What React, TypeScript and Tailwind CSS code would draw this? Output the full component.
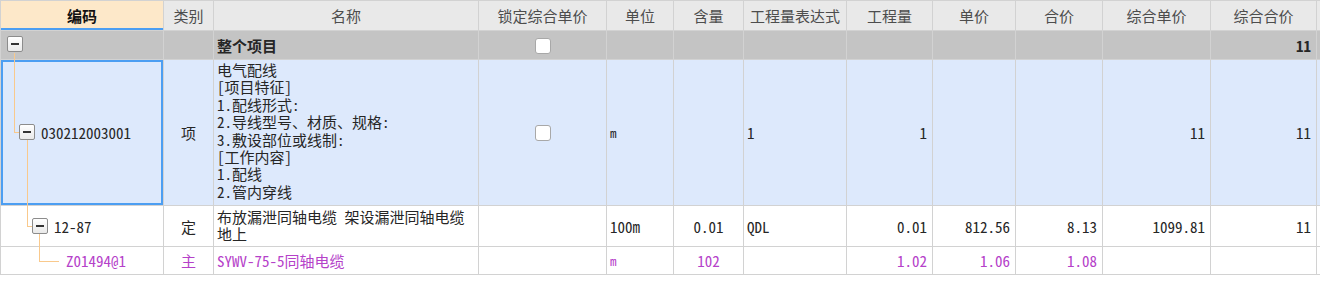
const LINE = "bg-[#f9c98c]";

function ExpandBox({ className }: { className: string }) {
  return (
    <span
      className={`absolute flex h-4 w-4 items-center justify-center rounded-[2px] border border-[#8c8c8c] bg-gradient-to-b from-white to-[#e9e9e9] ${className}`}
    >
      <span className="h-[2px] w-2 bg-[#333]" />
    </span>
  );
}

function Checkbox() {
  return (
    <span className="inline-block h-4 w-4 rounded-[3px] border border-[#a8a8a8] bg-white align-middle" />
  );
}

const th =
  "border border-[#d2d2d2] bg-[#e9e9e9] p-0 text-center font-normal text-[#4d4d4d]";
const td = "border border-[#d2d2d2] p-0";

export default function App() {
  return (
    <div className="h-[281px] w-[1320px] overflow-hidden bg-white font-['Noto_Sans_Mono_CJK_SC','Noto_Sans_CJK_SC',sans-serif] text-[15px] leading-none text-[#262626]">
      <table className="w-[1320px] table-fixed border-collapse">
        <colgroup>
          <col className="w-[163px]" />
          <col className="w-[50px]" />
          <col className="w-[265px]" />
          <col className="w-[128px]" />
          <col className="w-[67px]" />
          <col className="w-[70px]" />
          <col className="w-[103px]" />
          <col className="w-[86px]" />
          <col className="w-[83px]" />
          <col className="w-[87px]" />
          <col className="w-[108px]" />
          <col className="w-[106px]" />
          <col className="w-[4px]" />
        </colgroup>
        <thead>
          <tr className="h-[30px]">
            <th className="border border-[#d2d2d2] bg-[#fde8c9] p-0 text-center font-bold text-[#111] shadow-[inset_0_-2px_0_#4c9ef2]">
              编码
            </th>
            <th className={th}>类别</th>
            <th className={th}>名称</th>
            <th className={th}>锁定综合单价</th>
            <th className={th}>单位</th>
            <th className={th}>含量</th>
            <th className={th}>工程量表达式</th>
            <th className={th}>工程量</th>
            <th className={th}>单价</th>
            <th className={th}>合价</th>
            <th className={th}>综合单价</th>
            <th className={th}>综合合价</th>
            <th className={th} />
          </tr>
        </thead>
        <tbody>
          {/* whole project */}
          <tr className="h-[29px] bg-[#c4c4c4] font-bold">
            <td className={td}>
              <div className="relative h-[28px]">
                <ExpandBox className="left-[6px] top-[5px]" />
                <span className={`absolute left-[13px] top-[22px] h-[8px] w-px ${LINE}`} />
              </div>
            </td>
            <td className={td} />
            <td className={`${td} pl-[3px]`}>整个项目</td>
            <td className={`${td} text-center`}>
              <Checkbox />
            </td>
            <td className={td} />
            <td className={td} />
            <td className={td} />
            <td className={td} />
            <td className={td} />
            <td className={td} />
            <td className={td} />
            <td className={`${td} pr-[5px] text-right`}>11</td>
            <td className={td} />
          </tr>

          {/* bill item */}
          <tr className="h-[146px] bg-[#dde9fc]">
            <td className={`${td} shadow-[inset_0_0_0_2px_#4c9ef2]`}>
              <div className="relative h-[145px]">
                <span className={`absolute left-[13px] top-0 h-[72px] w-px ${LINE}`} />
                <span className={`absolute left-[13px] top-[72px] h-px w-[6px] ${LINE}`} />
                <ExpandBox className="left-[18px] top-[64px]" />
                <span className="absolute left-[40px] top-[65px] leading-[15px]">030212003001</span>
                <span className={`absolute left-[26px] top-[80px] h-[66px] w-px ${LINE}`} />
              </div>
            </td>
            <td className={`${td} text-center`}>项</td>
            <td className={`${td} px-[3px] pt-[1px] align-top leading-[17.4px]`}>
              电气配线
              <br />
              [项目特征]
              <br />
              1.配线形式:
              <br />
              2.导线型号、材质、规格:
              <br />
              3.敷设部位或线制:
              <br />
              [工作内容]
              <br />
              1.配线
              <br />
              2.管内穿线
            </td>
            <td className={`${td} text-center`}>
              <Checkbox />
            </td>
            <td className={`${td} pl-[3px] text-[13px]`}>m</td>
            <td className={td} />
            <td className={`${td} pl-[3px]`}>1</td>
            <td className={`${td} pr-[5px] text-right`}>1</td>
            <td className={td} />
            <td className={td} />
            <td className={`${td} pr-[5px] text-right`}>11</td>
            <td className={`${td} pr-[5px] text-right`}>11</td>
            <td className={td} />
          </tr>

          {/* quota */}
          <tr className="h-[41px] bg-white">
            <td className={td}>
              <div className="relative h-[40px]">
                <span className={`absolute left-[26px] top-0 h-[20px] w-px ${LINE}`} />
                <span className={`absolute left-[26px] top-[20px] h-px w-[6px] ${LINE}`} />
                <ExpandBox className="left-[31px] top-[12px]" />
                <span className="absolute left-[53px] top-[13px] leading-[15px]">12-87</span>
                <span className={`absolute left-[38px] top-[28px] h-[13px] w-px ${LINE}`} />
              </div>
            </td>
            <td className={`${td} text-center`}>定</td>
            <td className={`${td} px-[3px] pt-[2px] align-top leading-[17px]`}>
              布放漏泄同轴电缆 架设漏泄同轴电缆
              <br />
              地上
            </td>
            <td className={td} />
            <td className={`${td} pl-[3px]`}>100m</td>
            <td className={`${td} text-center`}>0.01</td>
            <td className={`${td} pl-[3px]`}>QDL</td>
            <td className={`${td} pr-[5px] text-right`}>0.01</td>
            <td className={`${td} pr-[5px] text-right`}>812.56</td>
            <td className={`${td} pr-[5px] text-right`}>8.13</td>
            <td className={`${td} pr-[5px] text-right`}>1099.81</td>
            <td className={`${td} pr-[5px] text-right`}>11</td>
            <td className={td} />
          </tr>

          {/* main material */}
          <tr className="h-[28px] bg-white text-[#b541c9]">
            <td className={td}>
              <div className="relative h-[27px]">
                <span className={`absolute left-[38px] top-0 h-[14px] w-px ${LINE}`} />
                <span className={`absolute left-[38px] top-[14px] h-px w-[20px] ${LINE}`} />
                <span className="absolute left-[65px] top-[6px] leading-[15px]">Z01494@1</span>
              </div>
            </td>
            <td className={`${td} text-center`}>主</td>
            <td className={`${td} pl-[3px]`}>SYWV-75-5同轴电缆</td>
            <td className={td} />
            <td className={`${td} pl-[3px] text-[13px]`}>m</td>
            <td className={`${td} text-center`}>102</td>
            <td className={td} />
            <td className={`${td} pr-[5px] text-right`}>1.02</td>
            <td className={`${td} pr-[5px] text-right`}>1.06</td>
            <td className={`${td} pr-[5px] text-right`}>1.08</td>
            <td className={td} />
            <td className={td} />
            <td className={td} />
          </tr>
        </tbody>
      </table>
    </div>
  );
}
